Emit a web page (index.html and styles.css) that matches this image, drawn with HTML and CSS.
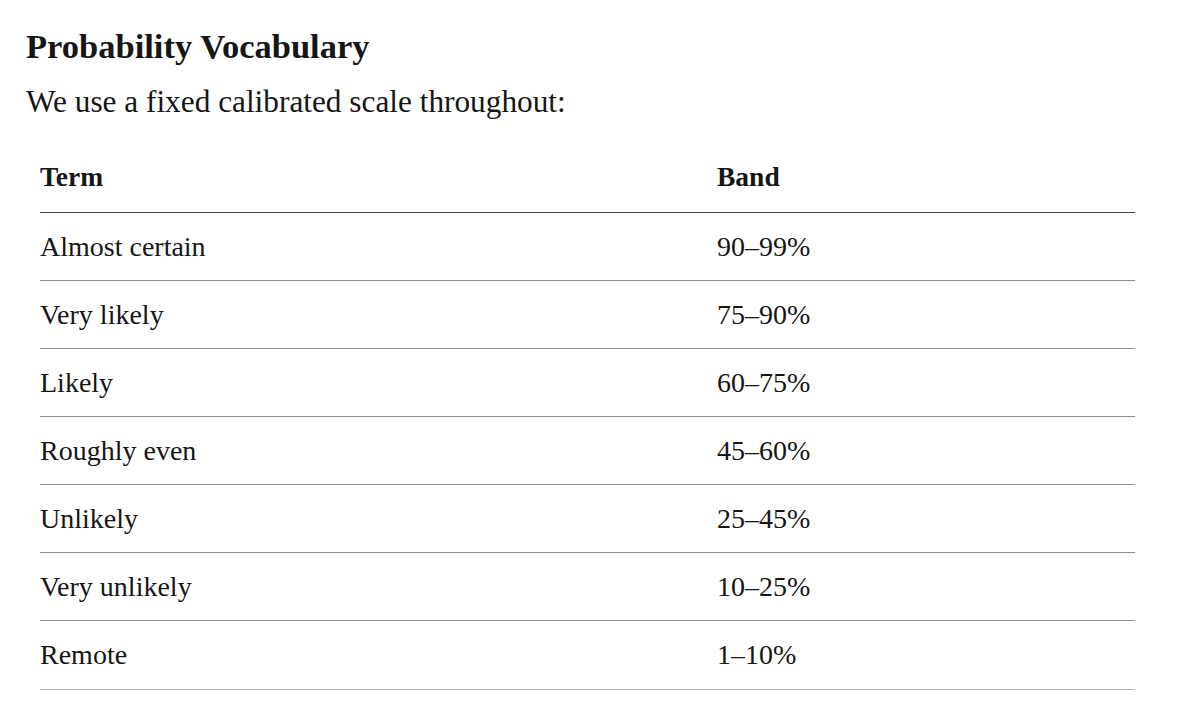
FILE: index.html
```html
<!DOCTYPE html>
<html lang="en">
<head>
<meta charset="utf-8">
<title>Probability Vocabulary</title>
<link rel="stylesheet" href="styles.css">
</head>
<body>
<main class="doc">
  <h1 class="title">Probability Vocabulary</h1>
  <p class="lead">We use a fixed calibrated scale throughout:</p>
  <table class="scale">
    <thead>
      <tr><th class="col-term">Term</th><th>Band</th></tr>
    </thead>
    <tbody>
      <tr><td>Almost certain</td><td>90–99%</td></tr>
      <tr><td>Very likely</td><td>75–90%</td></tr>
      <tr><td>Likely</td><td>60–75%</td></tr>
      <tr><td>Roughly even</td><td>45–60%</td></tr>
      <tr><td>Unlikely</td><td>25–45%</td></tr>
      <tr><td>Very unlikely</td><td>10–25%</td></tr>
      <tr><td>Remote</td><td>1–10%</td></tr>
    </tbody>
  </table>
</main>
</body>
</html>
```

FILE: styles.css
```css
html, body {
  margin: 0;
  padding: 0;
  background: #ffffff;
}
.doc {
  padding: 26px 26px 0 26px;
  font-family: "Liberation Serif", "Times New Roman", serif;
  color: #161616;
}
.title {
  margin: 0;
  font-size: 34.5px;
  line-height: 40px;
  font-weight: 700;
}
.lead {
  margin: 18px 0 0 0;
  font-size: 31.3px;
  line-height: 36px;
}
.scale {
  margin: 25px 0 0 14px;
  width: 1095px;
  border-collapse: collapse;
  font-size: 28px;
  line-height: 32px;
}
.scale th,
.scale td {
  text-align: left;
  padding: 18px 0 17px 0;
  vertical-align: middle;
}
.scale th {
  font-weight: 700;
  font-size: 27.5px;
  padding: 16px 0 19px 0;
}
.scale thead tr {
  border-bottom: 1px solid #444444;
}
.scale tbody tr {
  border-bottom: 1px solid #8c8c8c;
}
.scale tbody tr:last-child td {
  padding-bottom: 18px;
}
.scale tbody tr:last-child {
  border-bottom-color: #b0b0b0;
}
.col-term {
  width: 677px;
}
```
